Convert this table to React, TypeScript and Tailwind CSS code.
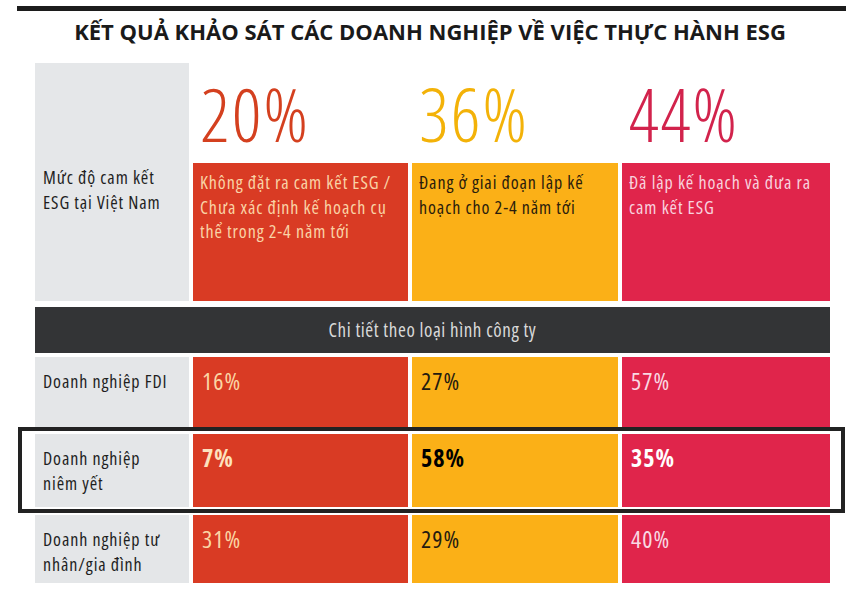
import React from "react";

const body = "font-['Open_Sans',sans-serif] font-stretch-condensed";

type Col = {
  big: string;
  bigColor: string;
  bg: string;
  textColor: string;
  desc: string[];
};

const cols: Col[] = [
  {
    big: "20%",
    bigColor: "text-[#d4401f]",
    bg: "bg-[#d93b24]",
    textColor: "text-[#f9d3a6]",
    desc: ["Không đặt ra cam kết ESG /", "Chưa xác định kế hoạch cụ", "thể trong 2-4 năm tới"],
  },
  {
    big: "36%",
    bigColor: "text-[#f3b208]",
    bg: "bg-[#fbb017]",
    textColor: "text-[#2a1c0c]",
    desc: ["Đang ở giai đoạn lập kế", "hoạch cho 2-4 năm tới"],
  },
  {
    big: "44%",
    bigColor: "text-[#d2234c]",
    bg: "bg-[#e0254b]",
    textColor: "text-[#f8d2de]",
    desc: ["Đã lập kế hoạch và đưa ra", "cam kết ESG"],
  },
];

const rows = [
  { label: ["Doanh nghiệp FDI"], values: ["16%", "27%", "57%"], h: "h-[70px]" },
  { label: ["Doanh nghiệp", "niêm yết"], values: ["7%", "58%", "35%"], h: "h-[73px]", bold: true },
  { label: ["Doanh nghiệp tư", "nhân/gia đình"], values: ["31%", "29%", "40%"], h: "h-[68px]" },
];

const rowText = ["text-[#fbd6a4]", "text-[#241a10]", "text-[#f9d9e3]"];
const boldText = ["text-[#fde2bf]", "text-black", "text-white"];

// lines joined with <br /> so each cell stays one text block
const Lines = ({ lines }: { lines: string[] }) => (
  <>
    {lines.map((l, i) => (
      <React.Fragment key={l}>
        {i > 0 && <br />}
        {l}
      </React.Fragment>
    ))}
  </>
);

const Row = ({ r }: { r: (typeof rows)[number] }) => (
  <div className={`grid grid-cols-[154px_215px_206px_208px] gap-x-[4px] ${r.h}`}>
    <div className="bg-[#e4e6e8] pl-[8px] pt-[12px]">
      <p className="text-[18px] leading-[24.5px] tracking-[0.9px] text-[#1f1f1f] whitespace-nowrap">
        <Lines lines={r.label} />
      </p>
    </div>
    {r.values.map((v, i) => (
      <div key={i} className={`${cols[i].bg} pl-[9px] pt-[10px]`}>
        <span
          className={`text-[24px] leading-[28px] tracking-[1px] ${
            r.bold ? `font-bold ${boldText[i]}` : rowText[i]
          }`}
        >
          {v}
        </span>
      </div>
    ))}
  </div>
);

export default function App() {
  return (
    <div className={`w-[860px] h-[598px] bg-white overflow-hidden ${body}`}>
      {/* top rule */}
      <div className="mt-[6px] ml-[17px] w-[829px] h-[5px] bg-[#1c1c1c]" />

      {/* title */}
      <h1 className="mt-[5px] h-[30px] text-center text-[22px] leading-[30px] font-bold text-[#1a1a1a] font-['Open_Sans',sans-serif] font-stretch-normal">
        KẾT QUẢ KHẢO SÁT CÁC DOANH NGHIỆP VỀ VIỆC THỰC HÀNH ESG
      </h1>

      <div className="ml-[35px] w-[795px] mt-[17px]">
        {/* summary */}
        <div className="grid grid-cols-[154px_215px_206px_208px] gap-x-[4px] h-[238px]">
          <div className="bg-[#e5e7e9] pl-[8px] pt-[102px]">
            <p className="text-[18px] leading-[24.5px] tracking-[0.9px] text-[#1f1f1f] whitespace-nowrap">
              <Lines lines={["Mức độ cam kết", "ESG tại Việt Nam"]} />
            </p>
          </div>
          {cols.map((c) => (
            <div key={c.big} className="flex flex-col">
              <div className={`h-[100px] pt-[6px] pl-[7px] text-[73px] leading-[90px] font-light tracking-[2px] ${c.bigColor}`}>
                {c.big}
              </div>
              <div className={`flex-1 ${c.bg} pl-[7px] pt-[7px]`}>
                <p className={`${c.textColor} text-[18px] leading-[24.5px] tracking-[0.9px] whitespace-nowrap`}>
                  <Lines lines={c.desc} />
                </p>
              </div>
            </div>
          ))}
        </div>

        {/* section bar */}
        <div className="mt-[6px] h-[46px] bg-[#333436] flex items-center justify-center text-[19px] tracking-[0.6px] text-[#d9d9d9]">
          Chi tiết theo loại hình công ty
        </div>

        <div className="mt-[4px]">
          <Row r={rows[0]} />
        </div>

        {/* highlighted row */}
        <div className="-ml-[17px] w-[827px] border-4 border-[#222222] pl-[13px] pr-[11px] pt-[3px] pb-[2px]">
          <Row r={rows[1]} />
        </div>

        <div className="mt-[2px]">
          <Row r={rows[2]} />
        </div>
      </div>
    </div>
  );
}
